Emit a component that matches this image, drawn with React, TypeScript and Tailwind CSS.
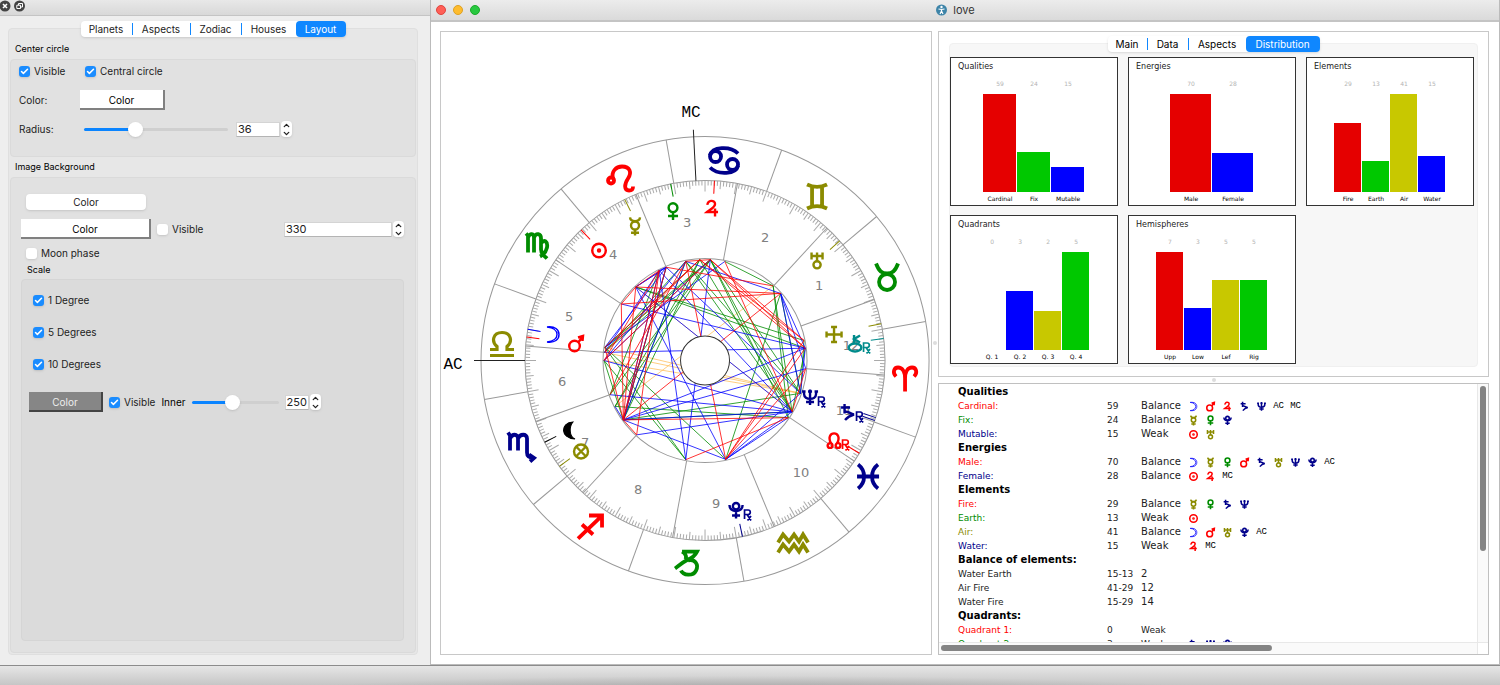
import { useState } from 'react'
import type { CSSProperties, ReactNode } from 'react'
import { Check, ChevronDown, ChevronUp } from 'lucide-react'
import clsx from 'clsx'

const RED = '#ff0000'
const GREEN = '#008c00'
const BLUE = '#0000ff'
const NAVY = '#00008b'
const OLIVE = '#8b8b00'
const TEAL = '#008b8b'

/* ---------- Symbols, drawn around 0,0 ---------- */

const planetGlyphs: Record<string, { color: string; shape: ReactNode }> = {
  sun: {
    color: RED,
    shape: (
      <>
        <circle r="6.8" />
        <circle r="1" />
      </>
    ),
  },
  moon: { color: BLUE, shape: <path strokeWidth="1.4" d="M-6 -7.5C2 -8.5 6 -5 6 0S2 8.5 -6 7.5C0 7 4 4 4 0S0 -7 -6 -7.5Z" /> },
  mercury: {
    color: OLIVE,
    shape: (
      <>
        <circle cy="-1" r="4" />
        <path d="M-5 -9C-4.5 -4 4.5 -4 5 -9M0 3V9M-4 6.3H4" />
      </>
    ),
  },
  venus: {
    color: GREEN,
    shape: (
      <>
        <circle cy="-3.8" r="4.4" />
        <path d="M0 .6V8.5M-5 4.5H5" />
      </>
    ),
  },
  mars: {
    color: RED,
    shape: (
      <>
        <circle cx="-1.5" cy="2.5" r="5.3" />
        <path d="M2.5 -1.5L6 -6M2 -6L7 -7.5L6.5 -2.5" />
      </>
    ),
  },
  jupiter: { color: RED, shape: <path d="M-4.5 -3.5C-5 -8.5 3 -9 3 -4.5C3 -1 -2 1 -5 3.5H6M3 0V8" /> },
  saturn: { color: NAVY, shape: <path d="M-3.5 -8.5V1M-7 -5H2M-3.5 -.5C0 -2 2 1.5 6 2C2 3 -1 5 -3 7.5" /> },
  uranus: {
    color: OLIVE,
    shape: (
      <>
        <circle cy="4.3" r="3.6" />
        <path d="M-5.5 -8V-1M5.5 -8V-1M-5.5 -4.5H5.5M0 -8V.5" />
      </>
    ),
  },
  neptune: { color: NAVY, shape: <path d="M-6 -7V-3.5C-6 3 6 3 6 -3.5V-7M0 -8V7.5M-4 4.5H4M-8 -6H-4.5M4.5 -6H8M-2 -6H2" /> },
  pluto: {
    color: NAVY,
    shape: (
      <>
        <circle cy="-4.3" r="3.2" />
        <path d="M-6.5 -5.5C-7 2.5 7 2.5 6.5 -5.5M0 1V8M-4 5H4" />
      </>
    ),
  },
  vertex: { color: OLIVE, shape: <path d="M-7.5 0H7.5M0 -7.5V7.5M-3 -7.5H3M-3 7.5H3M-7.5 -3V3M7.5 -3V3" /> },
  chiron: {
    color: TEAL,
    shape: (
      <>
        <ellipse cy="4" rx="6.3" ry="4" />
        <path d="M-1 -8.5V0M5 -8L-1 -4.5L5 -1" />
      </>
    ),
  },
  node: {
    color: RED,
    shape: (
      <>
        <circle cx="-4" cy="5" r="2.4" />
        <circle cx="4" cy="5" r="2.4" />
        <path d="M-3 3C-10 -10.500 10 -10.500 3 3" />
      </>
    ),
  },
  fortune: {
    color: OLIVE,
    shape: (
      <>
        <circle r="7" />
        <path d="M-5 -5L5 5M5 -5L-5 5" />
      </>
    ),
  },
  lilith: { color: '#000000', shape: <path fill="#000" strokeWidth="1" d="M4 -8.5C-9 -8 -9 8 6 8.500C0 6 0 -4 4 -8.5Z" /> },
}

const zodiacGlyphs: Record<string, ReactNode> = {
  aries: <path d="M0 13V0C0 -7 -3 -11 -7 -11C-11 -11 -13 -6 -9 -2M0 0C0 -7 3 -11 7 -11C11 -11 13 -6 9 -2" />,
  taurus: (
    <>
      <circle cy="5.500" r="8" />
      <path d="M-11 -13C-8 -5 -5 -3 0 -3S8 -5 11 -13" />
    </>
  ),
  gemini: <path d="M-10 -12C-4 -9 4 -9 10 -12M-10 12C-4 9 4 9 10 12M-5 -10V10M5 -10V10" />,
  cancer: (
    <>
      <circle cx="-8.5" cy="-4" r="5.5" />
      <circle cx="8.5" cy="4" r="5.5" />
      <path d="M-14 -5C-12 -14 6 -15 14 -7M14 5C12 14 -6 15 -14 7" />
    </>
  ),
  leo: (
    <>
      <circle cx="-9" cy="2" r="3" />
      <path d="M-7 0C-9 -7 -4 -12 2 -12C10 -12 12 -6 8 0C4 6 4 12 9 12C12 12 13 11 13 8" />
    </>
  ),
  virgo: <path d="M-11 -12L-9 -10V7M-9 -8C-7 -13 -3 -12 -3 -8V7M-3 -8C-1 -13 4 -12 4 -7V4C4 9 7 10 10 13M4 -2C7 -7 11 -4 10 2C9 6 7 9 3 11" />,
  libra: <path strokeWidth="3.2" d="M-12 5H-5V2C-11 -3 -9 -12 0 -12S11 -3 5 2V5H12M-12 11H12" />,
  scorpio: <path d="M-13 -14L-11 -11V4M-11 -8C-9 -13 -3 -13 -3 -8V4M-3 -8C-1 -13 6 -13 6 -8V6C6 10 8 11 12 11M8 8L13 11.500L9 15" />,
  sagittarius: <path d="M-12 12L11 -10M-1 -11H12V1M-8 -2L3 8" />,
  capricorn: <path d="M-12 5C-9 3 -5 -1 1 -4C6 -6 8 -8 10 -12H-5M-5 -12C-1 -10 0 -6 -2 -4M1 -3C8 -5 12 1 9 7C6 13 -4 12 -6 7" />,
  aquarius: <path d="M-15 -1L-10 -9L-4 -2L1 -9L6 -2L10 -9L15 -1M-15 9L-10 1L-4 8L1 1L6 8L10 1L15 9" />,
  pisces: <path d="M-10 -12C-2 -6 -2 6 -10 12M10 -12C2 -6 2 6 10 12M-11 0H11" />,
}

/* ---------- Wheel data (degrees are counted from the right, anticlockwise) ---------- */

const cusps = [19.8, 47.4, 79.6, 112.6, 146, 175.4, 199.8, 227.4, 259.6, 292.6, 326, 355.4]

const houseNumbers: [number, number, number][] = [
  [1, 114, -76], [2, 60, -124], [3, -18, -138], [4, -92, -107], [5, -136, -45], [6, -143, 20],
  [7, -120, 81], [8, -67, 128], [9, 11, 142], [10, 96, 111], [11, 139, 49], [12, 146, -16],
]

const signs: [string, string, number, number][] = [
  ['aries', RED, 200, 18],
  ['taurus', GREEN, 182, -84],
  ['gemini', OLIVE, 112, -164],
  ['cancer', NAVY, 19, -200],
  ['leo', RED, -85, -182],
  ['virgo', GREEN, -168, -115],
  ['libra', OLIVE, -203, -16],
  ['scorpio', NAVY, -184, 86],
  ['sagittarius', RED, -115, 166],
  ['capricorn', GREEN, -18, 203],
  ['aquarius', OLIVE, 88, 183],
  ['pisces', NAVY, 163, 116],
]

const planets: { name: string; x: number; y: number; deg: number; retro?: boolean }[] = [
  { name: 'jupiter', x: 7, y: -152, deg: 87 },
  { name: 'venus', x: -32, y: -149, deg: 101 },
  { name: 'mercury', x: -70, y: -134, deg: 116.5 },
  { name: 'sun', x: -106, y: -110, deg: 133.5 },
  { name: 'moon', x: -152, y: -26, deg: 170 },
  { name: 'mars', x: -129, y: -17, deg: 172.5 },
  { name: 'lilith', x: -136, y: 70, deg: 207 },
  { name: 'fortune', x: -124, y: 91, deg: 216 },
  { name: 'pluto', x: 31, y: 150, deg: 282, retro: true },
  { name: 'node', x: 129, y: 80, deg: 329, retro: true },
  { name: 'saturn', x: 143, y: 52, deg: 340.5, retro: true },
  { name: 'neptune', x: 105, y: 37, deg: 341.5, retro: true },
  { name: 'chiron', x: 150, y: -17, deg: 7, retro: true },
  { name: 'vertex', x: 129, y: -26, deg: 11.8 },
  { name: 'uranus', x: 112, y: -100, deg: 41.6 },
]

const points: Record<string, number> = {
  a: 78.7, b: 87, c: 93, d: 101, e: 112.6, f: 117, g: 133.3, h: 146, i: 172.5, j: 175.4, k: 180,
  l: 199.8, m: 207, n: 216, o: 227.4, p: 259, q: 281.8, r: 325.5, s: 329.5, t: 341, u: 355.4,
  v: 7, w: 11.4, x: 41.6, y: 47.6,
}

const aspects: { color: string; pairs: string }[] = [
  { color: '#ffc060', pairs: 'jt it kt gs ym' },
  { color: GREEN, pairs: 'gv gw br bs bt cs ds dt ay yr ys xt xq iq ip kp nt mr ns bi bj bm bl cn dn dj ci cm en fl kn wt vs' },
  { color: BLUE, pairs: 'jv ks ls nv nu nq ns os pb pf gq gs qt qs qr hv fs et dx ai ei fj en dn ge ge fe xv xu xt vt fn bk mn dk' },
  { color: RED, pairs: 'gx ey hx hn gn fo fn en dq xn rn rp qw qv qu as bw bv cw cv ic kb jc ld no hg db gf us in fk' },
]

function polar(deg: number, radius: number): [number, number] {
  const rad = (deg * Math.PI) / 180
  return [Math.cos(rad) * radius, -Math.sin(rad) * radius]
}

function Ray({ deg, from, to, color = '#999' }: { deg: number; from: number; to: number; color?: string }) {
  const [x1, y1] = polar(deg, from)
  const [x2, y2] = polar(deg, to)
  return <line x1={x1} y1={y1} x2={x2} y2={y2} stroke={color} />
}

function Wheel() {
  return (
    <svg viewBox="-264 -328 490 621" className="h-full w-full" role="img" aria-label="Birth chart">
      <g fill="none" stroke="#999" strokeWidth="1">
        <circle r="224" />
        <circle r="180" />
        <circle r="102" />
        {Array.from({ length: 360 }, (_, i) => (
          <Ray key={i} deg={10 + i} from={180} to={i % 10 === 0 ? 169 : i % 5 === 0 ? 172 : 175} color="#aaa" />
        ))}
        {Array.from({ length: 12 }, (_, i) => (
          <Ray key={i} deg={10 + i * 30} from={224} to={180} />
        ))}
        {cusps.map((deg) => (
          <Ray key={deg} deg={deg} from={180} to={102} />
        ))}
        <Ray deg={180} from={231} to={180} color="#222" />
        <Ray deg={92.9} from={231} to={180} color="#222" />
      </g>

      {/* Aspect lines */}
      <g strokeWidth="0.8">
        {aspects.map(({ color, pairs }) =>
          pairs.split(' ').map((pair, i) => {
            const [x1, y1] = polar(points[pair[0]], 101)
            const [x2, y2] = polar(points[pair[1]], 101)
            return <line key={color + i} x1={x1} y1={y1} x2={x2} y2={y2} stroke={color} />
          })
        )}
      </g>
      <circle r="24.5" fill="#fff" stroke="#333" />

      <g fill="#808080" fontSize="13" fontFamily="'DejaVu Sans', sans-serif" textAnchor="middle">
        {houseNumbers.map(([n, x, y]) => (
          <text key={n} x={x} y={y + 5}>{n}</text>
        ))}
      </g>

      <g fontSize="16" fontFamily="'Liberation Mono', monospace" textAnchor="middle">
        <text x="-252" y="8">AC</text>
        <text x="-14" y="-243">MC</text>
      </g>

      {signs.map(([name, color, x, y]) => (
        <g key={name} transform={`translate(${x} ${y})`} fill="none" stroke={color} strokeWidth="3.8">
          {zodiacGlyphs[name]}
        </g>
      ))}

      {planets.map(({ name, x, y, deg, retro }) => {
        const { color, shape } = planetGlyphs[name]
        return (
          <g key={name} fill="none" stroke={color} strokeWidth="2.4">
            <g strokeWidth="1">
              <Ray deg={deg} from={180} to={167} color={color} />
            </g>
            <g transform={`translate(${x} ${y})`}>
              {shape}
              {retro && <path strokeWidth="1.700" d="M8.500 8.500V-.5H12C15 -.5 15 4 12 4H8.500M11 4L15 10M15 5.500L11.500 10" />}
            </g>
          </g>
        )
      })}
    </svg>
  )
}

/* ---------- Controls ---------- */

function Tabs({ items, active, onSelect }: { items: { name: string; width: string }[]; active: string; onSelect: (name: string) => void }) {
  return (
    <div role="tablist" className="relative z-10 -mb-[9px] flex h-4 self-center rounded bg-white text-[10px] leading-4 shadow-sm">
      {items.map((tab, i) => (
        <button
          key={tab.name}
          role="tab"
          aria-selected={tab.name === active}
          onClick={() => onSelect(tab.name)}
          className={clsx(
            'flex items-center justify-center whitespace-nowrap',
            tab.width,
            tab.name === active && 'rounded bg-[#0f87ff] text-white'
          )}
        >
          <span className="flex-1">{tab.name}</span>
          {tab.name !== active && i < items.length - 2 && <span className="h-3 w-px bg-[#0f87ff]" />}
        </button>
      ))}
    </div>
  )
}

function Checkbox({ label, checked = false }: { label: string; checked?: boolean }) {
  return (
    <label className="flex items-center gap-1">
      <span className="grid size-[11px] place-items-center">
        <input
          type="checkbox"
          defaultChecked={checked}
          className="peer col-start-1 row-start-1 size-[11px] appearance-none rounded-[3px] bg-white shadow-sm checked:bg-[#1a8cff]"
        />
        <Check size={9} strokeWidth={4} className="pointer-events-none col-start-1 row-start-1 hidden text-white peer-checked:block" />
      </span>
      {label}
    </label>
  )
}

function Slider({ label, initial, width }: { label: string; initial: number; width: string }) {
  const [value, setValue] = useState(initial)
  return (
    <input
      type="range"
      aria-label={label}
      value={value}
      onChange={(e) => setValue(Number(e.target.value))}
      style={{ '--fill': `${value}%` } as CSSProperties}
      className={clsx(
        'h-4 appearance-none bg-transparent',
        '[&::-webkit-slider-runnable-track]:h-[3px] [&::-webkit-slider-runnable-track]:rounded [&::-webkit-slider-runnable-track]:bg-[linear-gradient(to_right,#0a84ff_var(--fill),#cfcfcf_var(--fill))]',
        '[&::-webkit-slider-thumb]:-mt-[6px] [&::-webkit-slider-thumb]:size-[15px] [&::-webkit-slider-thumb]:appearance-none [&::-webkit-slider-thumb]:rounded-full [&::-webkit-slider-thumb]:bg-white [&::-webkit-slider-thumb]:shadow',
        width
      )}
    />
  )
}

function Spin({ label, initial, width }: { label: string; initial: number; width: string }) {
  const [value, setValue] = useState(initial)
  return (
    <div className="flex items-center gap-px">
      <input
        aria-label={label}
        value={value}
        onChange={(e) => setValue(Number(e.target.value) || 0)}
        className={clsx('h-[15px] border border-[#d4d4d4] border-b-[#b4b4b4] bg-white px-px text-[11px] leading-3', width)}
      />
      <div className="flex h-4 w-[11px] flex-col items-center rounded-[4px] bg-white shadow-sm">
        <button aria-label={`Increase ${label}`} onClick={() => setValue(value + 1)} className="h-2">
          <ChevronUp size={9} strokeWidth={3.5} />
        </button>
        <button aria-label={`Decrease ${label}`} onClick={() => setValue(value - 1)} className="h-2">
          <ChevronDown size={9} strokeWidth={3.5} />
        </button>
      </div>
    </div>
  )
}

function LayoutPanel() {
  const [tab, setTab] = useState('Layout')
  const bevel = 'border-r-2 border-b-2 border-[#808080] bg-white pt-px'
  return (
    <aside className="flex w-[430px] shrink-0 flex-col bg-[#eeeeee] text-[10px] leading-4 text-[#222]">
      <header className="flex h-4 shrink-0 items-start gap-[3px] border-b border-[#c4c4c4] bg-linear-to-b from-[#e8e8e8] to-[#d8d8d8]">
        <button aria-label="Close panel">
          <svg width="11" height="12" viewBox="0 0 11 12">
            <circle cx="5" cy="6" r="5.500" fill="#444" />
            <path d="M3 4L7 8M7 4L3 8" stroke="#fff" strokeWidth="1.600" />
          </svg>
        </button>
        <button aria-label="Detach panel">
          <svg width="11" height="12" viewBox="0 0 11 12">
            <circle cx="5.5" cy="6" r="5.500" fill="#444" />
            <path d="M4.500 5V3.500H8.500V7H7M2.800 5.200H6.500V8.500H2.800Z" stroke="#fff" fill="none" />
          </svg>
        </button>
      </header>

      <div className="flex flex-1 flex-col pt-[5px] pr-3 pb-[10px] pl-2">
        <Tabs
          active={tab}
          onSelect={setTab}
          items={[
            { name: 'Planets', width: 'w-[52px]' },
            { name: 'Aspects', width: 'w-[58px]' },
            { name: 'Zodiac', width: 'w-[51px]' },
            { name: 'Houses', width: 'w-[54px]' },
            { name: 'Layout', width: 'w-[50px]' },
          ]}
        />
        <div className="flex flex-1 flex-col rounded border border-[#dfdfdf] bg-[#e7e7e7] px-px pt-[10px] pb-px">
          <h2 className="pl-[5px] text-[9px] leading-5 text-black">Center circle</h2>
          <section className="rounded border border-[#dadada] bg-[#e1e1e1] px-[8px] pb-3">
            <div className="flex h-[22px] items-center">
              <div className="w-[66px]">
                <Checkbox label="Visible" checked />
              </div>
              <Checkbox label="Central circle" checked />
            </div>
            <div className="flex h-[32px] items-center pt-1">
              <span className="w-[61px]">Color:</span>
              <button className={clsx('h-5 w-[85px] text-black', bevel)}>Color</button>
            </div>
            <div className="flex h-[30px] items-center">
              <span className="w-[65px]">Radius:</span>
              <Slider label="Radius" initial={34} width="w-36" />
              <div className="ml-2">
                <Spin label="radius value" initial={36} width="w-[44px]" />
              </div>
            </div>
          </section>

          <h2 className="pl-[5px] text-[9px] leading-5 text-black">Image Background</h2>
          <section className="flex flex-1 flex-col rounded border border-[#dadada] bg-[#e1e1e1] pt-4 pr-[11px] pb-[11px] pl-[10px]">
            <button className="ml-[5px] h-4 w-[120px] rounded bg-white shadow-sm">Color</button>
            <div className="mt-[9px] flex h-5 items-center gap-[6px]">
              <button className={clsx('h-5 w-[130px] text-black', bevel)}>Color</button>
              <Checkbox label="Visible" />
              <div className="ml-auto">
                <Spin label="size" initial={330} width="w-[108px]" />
              </div>
            </div>
            <div className="mt-[6px] ml-[5px] flex h-4 items-center">
              <Checkbox label="Moon phase" />
            </div>
            <h3 className="pl-[6px] text-[9px] leading-[18px] text-black">Scale</h3>
            <section className="flex-1 rounded border border-[#d5d5d5] bg-[#dbdbdb] pt-1 pl-[7px]">
              {['1 Degree', '5 Degrees', '10 Degrees'].map((label) => (
                <div key={label} className="flex h-8 items-center pl-1">
                  <Checkbox label={label} checked />
                </div>
              ))}
              <div className="flex h-11 items-center gap-[6px]">
                <button className="h-5 w-[74px] border-r-2 border-b-2 border-[#444] bg-[#868686] pt-px text-[#eee]">Color</button>
                <Checkbox label="Visible" checked />
                <span className="text-black">Inner</span>
                <Slider label="Inner" initial={46} width="w-[87px]" />
                <Spin label="inner value" initial={250} width="w-6" />
              </div>
            </section>
          </section>
        </div>
      </div>
    </aside>
  )
}

/* ---------- Distribution ---------- */

interface Bar {
  label: string
  value: number
  color: string
}

const R = 'bg-[#e50000]'
const G = 'bg-[#00c800]'
const B = 'bg-[#0000ff]'
const Y = 'bg-[#c8c800]'

const charts: { title: string; barWidth: string; bars: Bar[] }[] = [
  {
    title: 'Qualities',
    barWidth: 'w-[34px]',
    bars: [
      { label: 'Cardinal', value: 59, color: R },
      { label: 'Fix', value: 24, color: G },
      { label: 'Mutable', value: 15, color: B },
    ],
  },
  {
    title: 'Energies',
    barWidth: 'w-[42px]',
    bars: [
      { label: 'Male', value: 70, color: R },
      { label: 'Female', value: 28, color: B },
    ],
  },
  {
    title: 'Elements',
    barWidth: 'w-7',
    bars: [
      { label: 'Fire', value: 29, color: R },
      { label: 'Earth', value: 13, color: G },
      { label: 'Air', value: 41, color: Y },
      { label: 'Water', value: 15, color: B },
    ],
  },
  {
    title: 'Quadrants',
    barWidth: 'w-7',
    bars: [
      { label: 'Q. 1', value: 0, color: R },
      { label: 'Q. 2', value: 3, color: B },
      { label: 'Q. 3', value: 2, color: Y },
      { label: 'Q. 4', value: 5, color: G },
    ],
  },
  {
    title: 'Hemispheres',
    barWidth: 'w-7',
    bars: [
      { label: 'Upp', value: 7, color: R },
      { label: 'Low', value: 3, color: B },
      { label: 'Lef', value: 5, color: Y },
      { label: 'Rig', value: 5, color: G },
    ],
  },
]

function BarChart({ title, barWidth, bars }: { title: string; barWidth: string; bars: Bar[] }) {
  const max = Math.max(...bars.map((bar) => bar.value))
  return (
    <div className="flex h-[149px] flex-col border border-[#333] bg-white">
      <h3 className="pt-[3px] pl-[7px] text-[8px] leading-3 text-[#222]">{title}</h3>
      <div className="flex flex-1 justify-center text-center text-[6px]">
        {bars.map((bar) => (
          <div key={bar.label} className={clsx('flex flex-col', barWidth)}>
            <span className="pt-[6px] leading-[10px] text-[#b4b4b4]">{bar.value}</span>
            <div className="mt-[5px] flex h-[98px] items-end border-r border-white">
              <div className={clsx('w-full', bar.color)} style={{ height: `${(bar.value / max) * 100}%` }} />
            </div>
            <span className="pt-px leading-3 whitespace-nowrap text-black">{bar.label}</span>
          </div>
        ))}
      </div>
    </div>
  )
}

type Row = [string, string, string, string, string?]

const report: { heading: string; plain?: boolean; rows: Row[] }[] = [
  {
    heading: 'Qualities',
    rows: [
      ['Cardinal:', 'text-[#ff0000]', '59', 'Balance', 'moon mars jupiter saturn neptune AC MC'],
      ['Fix:', 'text-[#008c00]', '24', 'Balance', 'mercury venus pluto'],
      ['Mutable:', 'text-[#00008b]', '15', 'Weak', 'sun uranus'],
    ],
  },
  {
    heading: 'Energies',
    rows: [
      ['Male:', 'text-[#ff0000]', '70', 'Balance', 'moon mercury venus mars saturn uranus neptune pluto AC'],
      ['Female:', 'text-[#00008b]', '28', 'Balance', 'sun jupiter MC'],
    ],
  },
  {
    heading: 'Elements',
    rows: [
      ['Fire:', 'text-[#ff0000]', '29', 'Balance', 'mercury venus saturn neptune'],
      ['Earth:', 'text-[#008c00]', '13', 'Weak', 'sun'],
      ['Air:', 'text-[#8b8b00]', '41', 'Balance', 'moon mars uranus pluto AC'],
      ['Water:', 'text-[#00008b]', '15', 'Weak', 'jupiter MC'],
    ],
  },
  {
    heading: 'Balance of elements:',
    rows: [
      ['Water Earth', 'text-[#222]', '15-13', '2'],
      ['Air Fire', 'text-[#222]', '41-29', '12'],
      ['Water Fire', 'text-[#222]', '15-29', '14'],
    ],
  },
  {
    heading: 'Quadrants:',
    plain: true,
    rows: [
      ['Quadrant 1:', 'text-[#ff0000]', '0', 'Weak'],
      ['Quadrant 2:', 'text-[#008c00]', '3', 'Weak', 'saturn neptune pluto'],
    ],
  },
]

function Symbol({ name }: { name: string }) {
  if (name === 'AC' || name === 'MC') {
    return (
      <span className="w-[17px] text-center font-['Liberation_Mono',monospace] text-[9px] text-black">
        {name}
      </span>
    )
  }
  const { color, shape } = planetGlyphs[name]
  return (
    <span className="flex w-[17px] justify-center">
      <svg width="11" height="11" viewBox="-10 -10 20 20" fill="none" stroke={color} strokeWidth="2.800" aria-label={name}>
        {shape}
      </svg>
    </span>
  )
}

function Report() {
  return (
    <table className="w-full table-fixed text-[9px] leading-[14px] text-[#222]">
      <colgroup>
        <col className="w-[149px]" />
        <col className="w-[34px]" />
        <col className="w-11" />
        <col />
      </colgroup>
      {report.map(({ heading, plain, rows }) => (
        <tbody key={heading}>
          <tr>
            <th colSpan={4} className="h-[14px] p-0 text-left text-[10px] font-bold text-black">{heading}</th>
          </tr>
          {rows.map(([label, color, value, state, symbols]) => (
            <tr key={label} className="h-[14px]">
              <td className={clsx('p-0', color)}>{label}</td>
              <td className="p-0">{value}</td>
              <td className={clsx('p-0', plain ? 'text-[9px]' : 'text-[10px]')}>{state}</td>
              <td className="p-0">
                <div className="flex h-[14px] items-center">
                  {symbols?.split(' ').map((name) => <Symbol key={name} name={name} />)}
                </div>
              </td>
            </tr>
          ))}
        </tbody>
      ))}
    </table>
  )
}

function ChartWindow() {
  const [tab, setTab] = useState('Distribution')
  return (
    <main className="flex min-w-0 flex-1 flex-col border-x border-b border-[#bbb] bg-white">
      <header className="flex h-[22px] shrink-0 items-center border-b-2 border-[#c4c4c4] bg-linear-to-b from-[#ececec] to-[#dadada] pl-[5px]">
        <div className="flex gap-[7px]">
          <button aria-label="Close" className="size-[10px] rounded-full border border-[#e0443e] bg-[#ff5f57]" />
          <button aria-label="Minimize" className="size-[10px] rounded-full border border-[#dea123] bg-[#febc2e]" />
          <button aria-label="Zoom" className="size-[10px] rounded-full border border-[#1aab29] bg-[#28c840]" />
        </div>
        <div className="flex flex-1 items-center justify-center gap-[6px] pr-[68px] text-[11px] text-[#333]">
          <svg width="11" height="12" viewBox="0 0 11 12">
            <circle cx="5.500" cy="6" r="5.500" fill="#3d84a8" />
            <circle cx="5.500" cy="3" r="1.200" fill="#fff" />
            <path d="M2.500 5L5.500 5.500L8.500 5M5.500 5V7.500M5.500 7L4 10M5.500 7L7 10" stroke="#fff" strokeWidth="1.200" fill="none" />
          </svg>
          <h1>love</h1>
        </div>
      </header>

      <div className="flex min-h-0 flex-1 pt-[9px] pr-[10px] pb-[9px] pl-[9px]">
        <section className="min-h-0 min-w-0 flex-[491] border border-[#c8c8c8]">
          <Wheel />
        </section>

        <div className="flex w-[6px] items-center justify-center">
          <span className="size-1 rounded-full bg-[#ddd]" />
        </div>

        <div className="flex min-w-0 flex-[552] flex-col font-['DejaVu_Sans',sans-serif]">
          <section className="flex h-[346px] shrink-0 flex-col border border-[#c8c8c8] px-[10px] pt-1 font-[Inter,sans-serif]">
            <Tabs
              active={tab}
              onSelect={setTab}
              items={[
                { name: 'Main', width: 'w-[40px]' },
                { name: 'Data', width: 'w-[41px]' },
                { name: 'Aspects', width: 'w-[57px]' },
                { name: 'Distribution', width: 'w-[74px]' },
              ]}
            />
            <div className="grid grid-cols-3 gap-x-[10px] gap-y-[9px] rounded border border-[#f0f0f0] bg-[#f7f7f7] pt-[13px] pr-[3px] pb-[2px] font-['DejaVu_Sans',sans-serif]">
              {charts.map((chart) => (
                <BarChart key={chart.title} {...chart} />
              ))}
            </div>
          </section>

          <div className="flex h-[6px] shrink-0 items-center justify-center">
            <span className="size-1 rounded-full bg-[#ddd]" />
          </div>

          <section className="flex min-h-0 flex-1 flex-col border border-[#c0c0c0]">
            <div className="flex min-h-0 flex-1">
              <div className="min-w-0 flex-1 overflow-hidden pt-px pl-[19px]">
                <Report />
              </div>
              <div className="w-[11px] border-l border-[#e8e8e8] bg-[#fafafa] p-[2px]">
                <div className="h-[165px] rounded-full bg-[#848484]" />
              </div>
            </div>
            <div className="flex h-[12px] shrink-0 border-t border-[#e8e8e8]">
              <div className="flex-1 bg-[#fafafa] p-[2px]">
                <div className="h-[6px] w-[62%] rounded-full bg-[#848484]" />
              </div>
              <div className="w-[11px] border-l border-[#e8e8e8]" />
            </div>
          </section>
        </div>
      </div>
    </main>
  )
}

export default function App() {
  return (
    <div className="flex h-screen flex-col overflow-hidden bg-[#eeeeee] font-[Inter,sans-serif]">
      <div className="flex min-h-0 flex-1">
        <LayoutPanel />
        <ChartWindow />
      </div>
      <footer className="h-5 shrink-0 border-t border-[#8c8c8c] bg-[radial-gradient(ellipse_at_50%_140%,#00000030,transparent_45%),linear-gradient(to_bottom,#e6e6e6,#c6c6c6)]" />
    </div>
  )
}
